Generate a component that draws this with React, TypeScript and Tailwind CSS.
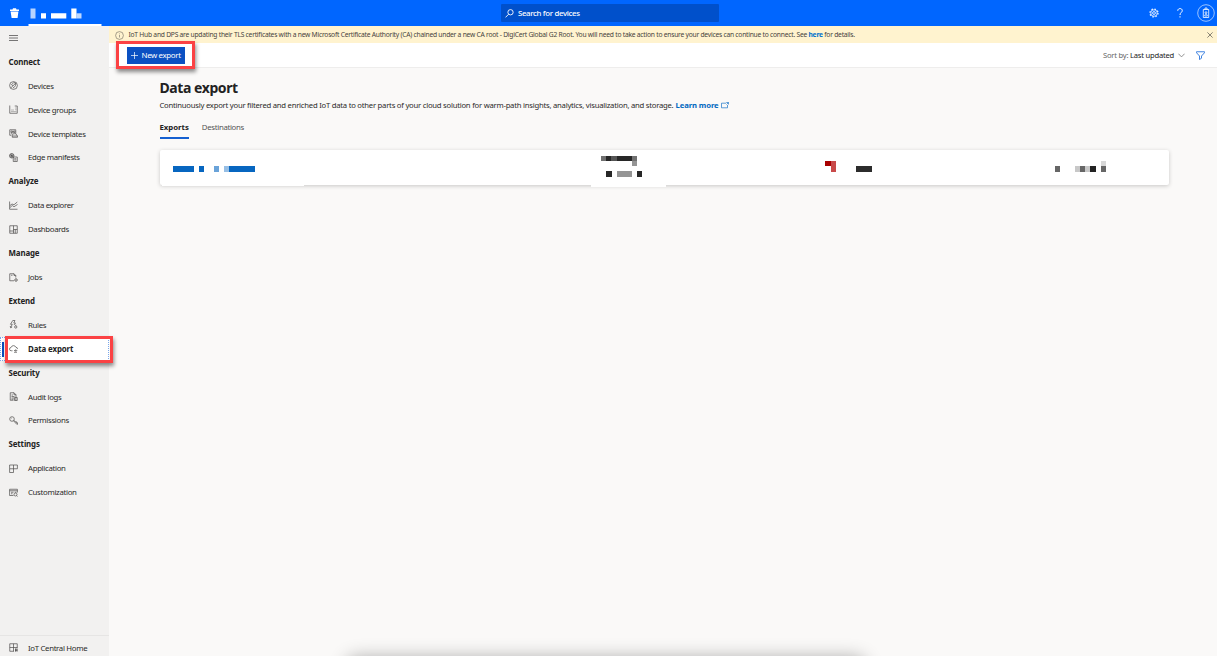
import type { ReactNode } from "react";

type IconProps = { children: ReactNode; className?: string };

function Icon({ children, className = "h-[9px] w-[9px]" }: IconProps) {
  return (
    <svg viewBox="0 0 18 18" fill="none" stroke="currentColor" strokeWidth="1.4" className={`shrink-0 ${className}`}>
      {children}
    </svg>
  );
}

const icons = {
  devices: (
    <Icon>
      <circle cx="9" cy="9" r="7.800" />
      <path d="M3.500 14 8 9.500M5 7.500l4.500-4.500M5 7.500l3 2M9.500 3l4 1.500-.5 4.500-3 4M13.500 4.500 8 9.500M8 13.500l2-.5" />
    </Icon>
  ),
  groups: (
    <Icon>
      <path d="M1.500 1v15.500h15V2h-5M5 13h2M9 13h2M13 13h1.500M5 10h2M13 9.500h1.500M13 6h1.500M9 10h1" />
    </Icon>
  ),
  templates: (
    <Icon>
      <path d="M1.500 1.500h12v8M1.500 1.500v11h3M4 4h3v3H4zM9 4h3v3H9zM4 9.500h3M6.500 12.500l2-3h5l2.500 3v1.500h-9.500zM6.500 14v2.500h10.500v-3" />
    </Icon>
  ),
  edge: (
    <Icon>
      <circle cx="5.500" cy="5.500" r="4.500" />
      <path d="M1 5.500h9M5.500 1v9M2.500 2.500l6 6M8.500 2.500l-6 6M8.500 8h8v9h-8zM10.500 11.500h4M10.500 14h4" />
    </Icon>
  ),
  explorer: (
    <Icon>
      <path d="M1.200 1v15.500H17M2 13l4.500-4 3.500 2.500L17 7M2 9l4-3 4 1.500L16.500 2" />
    </Icon>
  ),
  dashboards: (
    <Icon>
      <path d="M1.500 1.500h15v15h-15zM9 1.500v15M9 9h7.500M1.500 12H9M12.500 9v7.500" />
    </Icon>
  ),
  jobs: (
    <Icon>
      <path d="M10 15.500H1.500v-14H10L13.500 5v4M10 1.500V5h3.500M4 4.500h3" />
      <circle cx="14" cy="14" r="2.300" />
      <path d="M14 10.500v1.200M14 16.300v1.200M10.500 14h1.200M16.300 14h1.200" />
    </Icon>
  ),
  rules: (
    <Icon>
      <path d="M7.500 1 3 8.500h3.500L3.500 15M7.500 1H12L9.500 6H13l-3 4M2.500 12l.8 3.500 3-1.500" />
      <circle cx="13.500" cy="14" r="2.300" />
      <path d="M13.500 9.500v2" />
    </Icon>
  ),
  dataExport: (
    <Icon>
      <path d="M7 13.500H4.500a3.300 3.300 0 0 1-.3-6.600 5 5 0 0 1 9.500-.4 3.500 3.500 0 0 1 3.300 3.600M10 13h5M13 10.500l2.500 2.500-2.500 2.500M10 16.500h6" />
    </Icon>
  ),
  audit: (
    <Icon>
      <path d="M9 16.500H2.500v-15H10l4 4v5M10 1.500v4h4M5 6h3M5 9h6M5 12h5M5 14.500h4M11 11h5.500v6H11zM13.700 11v6" />
    </Icon>
  ),
  permissions: (
    <Icon>
      <circle cx="6" cy="6" r="4.600" />
      <path d="m9 9.500 6.500 7h1.700v-3H15v-2h-2.500L10 8.500M4 4.500h1" />
    </Icon>
  ),
  application: (
    <Icon>
      <path d="M1.200 2h15.600v7.500H1.200zM1.200 9.500V17H9V2" />
    </Icon>
  ),
  customization: (
    <Icon>
      <path d="M9 15H1.200V2.500h15.600V9M1.200 5.500h15.600M4 8.500h5M4 11.500h3" />
      <circle cx="13" cy="13" r="3" />
      <path d="m15 15 2 2M11.500 8.500H15" />
    </Icon>
  ),
  home: (
    <Icon>
      <path d="M10 16.500H1.500v-15h15V10M9 1.500v15M1.500 9h15M12 12.500h5M12 15h5M13 11v6.500M16 11v6.500" />
    </Icon>
  ),
};

function Heading({ text }: { text: string }) {
  return <div className="flex h-[23.92px] items-center pt-[1.500px] pl-[8.500px] text-[7.900px] font-bold tracking-[-0.130px] text-[#222]">{text}</div>;
}

function NavItem({ icon, text }: { icon: ReactNode; text: string }) {
  return (
    <div className="flex h-[23.92px] items-center pl-[8.500px] text-[#4d4c4b]">
      {icon}
      <span className="ml-[10.500px] pt-[1.600px] text-[7.800px] tracking-[-0.320px] text-[#2b2a29]">{text}</span>
    </div>
  );
}

function Sidebar() {
  return (
    <nav className="flex w-[109px] shrink-0 flex-col bg-[#f2f1f0] whitespace-nowrap">
      <div className="flex h-[24px] items-center pl-[8.500px]">
        <svg viewBox="0 0 9 6" className="h-[6px] w-[9px]" stroke="#555" strokeWidth=".8">
          <path d="M0 .5h9M0 3h9M0 5.500h9" />
        </svg>
      </div>
      <Heading text="Connect" />
      <NavItem icon={icons.devices} text="Devices" />
      <NavItem icon={icons.groups} text="Device groups" />
      <NavItem icon={icons.templates} text="Device templates" />
      <NavItem icon={icons.edge} text="Edge manifests" />
      <Heading text="Analyze" />
      <NavItem icon={icons.explorer} text="Data explorer" />
      <NavItem icon={icons.dashboards} text="Dashboards" />
      <Heading text="Manage" />
      <NavItem icon={icons.jobs} text="Jobs" />
      <Heading text="Extend" />
      <NavItem icon={icons.rules} text="Rules" />
      <div className="relative flex h-[23.92px] items-center border border-dotted border-[#79a7ea] bg-white pl-[7.500px] text-[#4d4c4b]">
        {icons.dataExport}
        <span className="ml-[10.500px] pt-[2px] text-[7.900px] font-bold tracking-[-0.130px] text-[#222]">Data export</span>
        <span className="absolute top-[4px] left-[1px] h-[15px] w-[2px] bg-[#0b4fc0]" />
        <span className="absolute -top-[2px] left-[4px] z-10 h-[27.500px] w-[108px] border-[3px] border-[#fb4244] shadow-[1px_3px_4px_rgba(0,0,0,0.45)]" />
      </div>
      <Heading text="Security" />
      <NavItem icon={icons.audit} text="Audit logs" />
      <NavItem icon={icons.permissions} text="Permissions" />
      <Heading text="Settings" />
      <NavItem icon={icons.application} text="Application" />
      <NavItem icon={icons.customization} text="Customization" />
      <div className="mt-auto h-[21px] border-t border-[#e6e5e4]">
        <NavItem icon={icons.home} text="IoT Central Home" />
      </div>
    </nav>
  );
}

function Header() {
  return (
    <header className="flex h-[26px] shrink-0 items-center bg-[#0066ff] text-white">
      <svg viewBox="0 0 110 26" className="h-[26px] w-[110px] shrink-0" fill="#fff">
        <path d="M10 9.500h2.500l.5-1.300h3l.5 1.300H19v1.500h-9zM10.600 11.500h7.800L17.600 18h-6z" />
        <path d="M30.500 8.500h5v10h-5z" opacity=".72" />
        <path d="M41 13.300h5v5.200h-5zM51 13.300h15.300v5.200H51zM71.300 8.500h5.200v10h-5.200z" />
        <path d="M76.500 13.300h5v5.200h-5z" opacity=".75" />
        <path d="M28.500 24h73v2h-73z" />
      </svg>
      <div className="ml-[390.500px] flex h-[18px] w-[218px] items-center rounded-[1px] bg-[#0050cb] pl-[4px]">
        <svg viewBox="0 0 18 18" className="h-[9px] w-[9px]" fill="none" stroke="#fff" strokeWidth="1.800">
          <circle cx="11" cy="6.500" r="5.300" />
          <path d="M7.200 10.500 1 16.800" />
        </svg>
        <span className="ml-[4.500px] pt-px text-[7.800px] font-medium tracking-[-0.320px]">Search for devices</span>
      </div>
      <div className="ml-auto flex items-center pr-[2px]">
        <svg viewBox="0 0 20 20" className="h-[10px] w-[10px]" fill="none" stroke="#fff">
          <circle cx="10" cy="10" r="8" strokeWidth="2.500" strokeDasharray="3.140 3.143" opacity=".9" />
          <circle cx="10" cy="10" r="6.500" strokeWidth="1.500" />
          <circle cx="10" cy="10" r="2.800" strokeWidth="1.700" />
        </svg>
        <svg viewBox="0 0 12 20" className="ml-[18px] h-[10px] w-[6px]" fill="none" stroke="#fff" strokeWidth="2">
          <path d="M1.500 5.500C1.500-.3 10.500-.3 10.500 5.200 10.500 9 6 9 6 14M6 16.500v2.500" />
        </svg>
        <svg viewBox="0 0 18 18" className="ml-[14px] h-[18px] w-[18px]" fill="none" stroke="#fff" strokeWidth=".8">
          <circle cx="9" cy="9" r="8.300" opacity=".75" />
          <path d="M6.300 5.500h5.400v8H6.300zM8 5.500V4h2v1.500M7.700 12c0-2.500 2.600-2.500 2.600 0z" />
          <circle cx="9" cy="8.600" r=".9" />
        </svg>
      </div>
    </header>
  );
}

function Banner() {
  return (
    <div className="flex h-[17px] shrink-0 items-center bg-[#fff3cf] pt-px pr-[4px] pl-[6px] whitespace-nowrap text-[#45423d]">
      <svg viewBox="0 0 18 18" className="h-[9px] w-[9px] shrink-0" fill="none" stroke="#6b675c" strokeWidth="1.200">
        <circle cx="9" cy="9" r="7.800" />
        <path d="M9 8v5M9 5v1.500" />
      </svg>
      <p className="ml-[4.500px] pt-px text-[6.700px] tracking-[-0.230px]">
        IoT Hub and DPS are updating their TLS certificates with a new Microsoft Certificate Authority (CA) chained under a new CA root - DigiCert Global G2 Root. You will need to take action to ensure your devices can continue to connect. See{" "}
        <a className="font-bold text-[#0070cc]">here</a> for details.
      </p>
      <svg viewBox="0 0 6 6" className="ml-auto h-[6px] w-[6px]" stroke="#55524b" strokeWidth=".7">
        <path d="m.4.400 5.200 5.200m0-5.200L.4 5.600" />
      </svg>
    </div>
  );
}

function Toolbar() {
  return (
    <div className="flex h-[25px] shrink-0 items-center border-b border-[#eeedec] bg-white pr-[12px] pl-[18px]">
      <div className="relative flex h-[17px] w-[58px] items-center bg-[#0b50c2] pl-[4px] text-white">
        <svg viewBox="0 0 7 7" className="h-[7px] w-[7px]" stroke="#fff" strokeWidth=".7">
          <path d="M3.500 0v7M0 3.500h7" />
        </svg>
        <span className="ml-[3.500px] pt-px text-[7.900px] tracking-[-0.360px] whitespace-nowrap">New export</span>
        <span className="absolute -top-[6px] -left-[11px] h-[28px] w-[79px] border-[3px] border-[#fb4244] shadow-[1px_3px_4px_rgba(0,0,0,0.45)]" />
      </div>
      <div className="ml-auto flex items-center text-[7.600px] tracking-[-0.220px] whitespace-nowrap text-[#666]">
        <span className="pt-px">
          Sort by: <span className="text-[#222]">Last updated</span>
        </span>
        <svg viewBox="0 0 7 5" className="ml-[4px] h-[5px] w-[7px]" fill="none" stroke="#777" strokeWidth=".8">
          <path d="m.4.700 3.100 3.200L6.600.7" />
        </svg>
        <svg viewBox="0 0 18 18" className="ml-[11px] h-[9px] w-[9px]" fill="none" stroke="#1264d8" strokeWidth="1.600">
          <path d="M1 1.500h16v2l-6 6.500v4.500l-4 2.500v-7L1 3.500z" />
        </svg>
      </div>
    </div>
  );
}

function ExportCard() {
  return (
    <div className="mt-[11px] ml-[0.500px] h-[35px] w-[1009px] rounded-[2px] bg-white shadow-[0_1px_4px_rgba(0,0,0,0.2)]">
      <svg viewBox="0 0 1009 37" className="h-[37px] w-[1009px]" shapeRendering="crispEdges">
        <path d="M2 34h142v1.500H2zM430.500 30h75.500v7h-75.500z" fill="#fff" />
        <g fill="#0766c0">
          <path d="M13 16h21v6H13zM39 16h5v6h-5zM69 16h26v6H69z" />
          <path d="M54 16h5v6h-5z" opacity=".6" />
          <path d="M64 16h5v6h-5z" opacity=".42" />
        </g>
        <path d="M441 6h5v5h-5z" fill="#707070" />
        <path d="M446 6h5v5h-5zM457 6h15v5h-15zM446 21h6v6h-6zM477 21h5v6h-5z" fill="#272727" />
        <path d="M451 6h6v5h-6z" fill="#555" />
        <path d="M472 6h5v10h-5zM457 21h15v6h-15z" fill="#959595" />
        <path d="M472 6h5v5h-5z" fill="#707070" />
        <path d="M665 11h6v5h-6z" fill="#a80000" />
        <path d="M671 11h5v11h-5v-6z" fill="#c94a4a" />
        <path d="M696 16h16v6h-16z" fill="#2c2c2c" />
        <path d="M895 16h5v6h-5zM920 16h5v6h-5zM941 16h5v6h-5z" fill="#666" />
        <path d="M915 16h5v6h-5zM925 16h5v6h-5z" fill="#c8c8c8" />
        <path d="M930 16h6v6h-6z" fill="#222" />
        <path d="M941 11h5v5h-5z" fill="#d8d8d8" />
      </svg>
    </div>
  );
}

export default function App() {
  return (
    <div className="relative flex h-[656px] w-[1217px] flex-col overflow-hidden bg-[#faf9f8] font-['Noto_Sans',sans-serif] leading-none">
      <Header />
      <div className="flex min-h-0 flex-1">
        <Sidebar />
        <div className="flex min-w-0 flex-1 flex-col">
          <Banner />
          <Toolbar />
          <main className="flex flex-col items-start pl-[50.500px] whitespace-nowrap">
            <h1 className="mt-[12px] text-[14px] leading-[15px] font-bold tracking-[-0.430px] text-[#222]">Data export</h1>
            <p className="mt-[5px] flex items-center text-[7.700px] leading-[10px] tracking-[-0.240px] text-[#2b2a29]">
              <span>Continuously export your filtered and enriched IoT data to other parts of your cloud solution for warm-path insights, analytics, visualization, and storage.</span>
              <a className="ml-[2px] font-bold tracking-[-0.100px] text-[#0068c0]">Learn more</a>
              <svg viewBox="0 0 8 7" className="ml-[2px] h-[7px] w-[8px]" fill="none" stroke="#1874c8" strokeWidth=".7">
                <path d="M5 1.200H.5v4.600h6V3M5.300.5h2.200v2M7.400.6 5.500 2.500" />
              </svg>
            </p>
            <div className="mt-[11px] flex h-[18px] gap-[13px] text-[7.800px]">
              <span className="border-b-[2px] border-[#1560d0] pt-[2.500px] font-bold tracking-[-0.020px] text-[#222]">Exports</span>
              <span className="pt-[2.500px] tracking-[-0.320px] text-[#555]">Destinations</span>
            </div>
            <ExportCard />
          </main>
        </div>
      </div>
      <div className="absolute -bottom-[19px] left-[350px] h-[14px] w-[512px] rounded-full shadow-[0_0_18px_4px_rgba(0,0,0,0.3)]" />
    </div>
  );
}
